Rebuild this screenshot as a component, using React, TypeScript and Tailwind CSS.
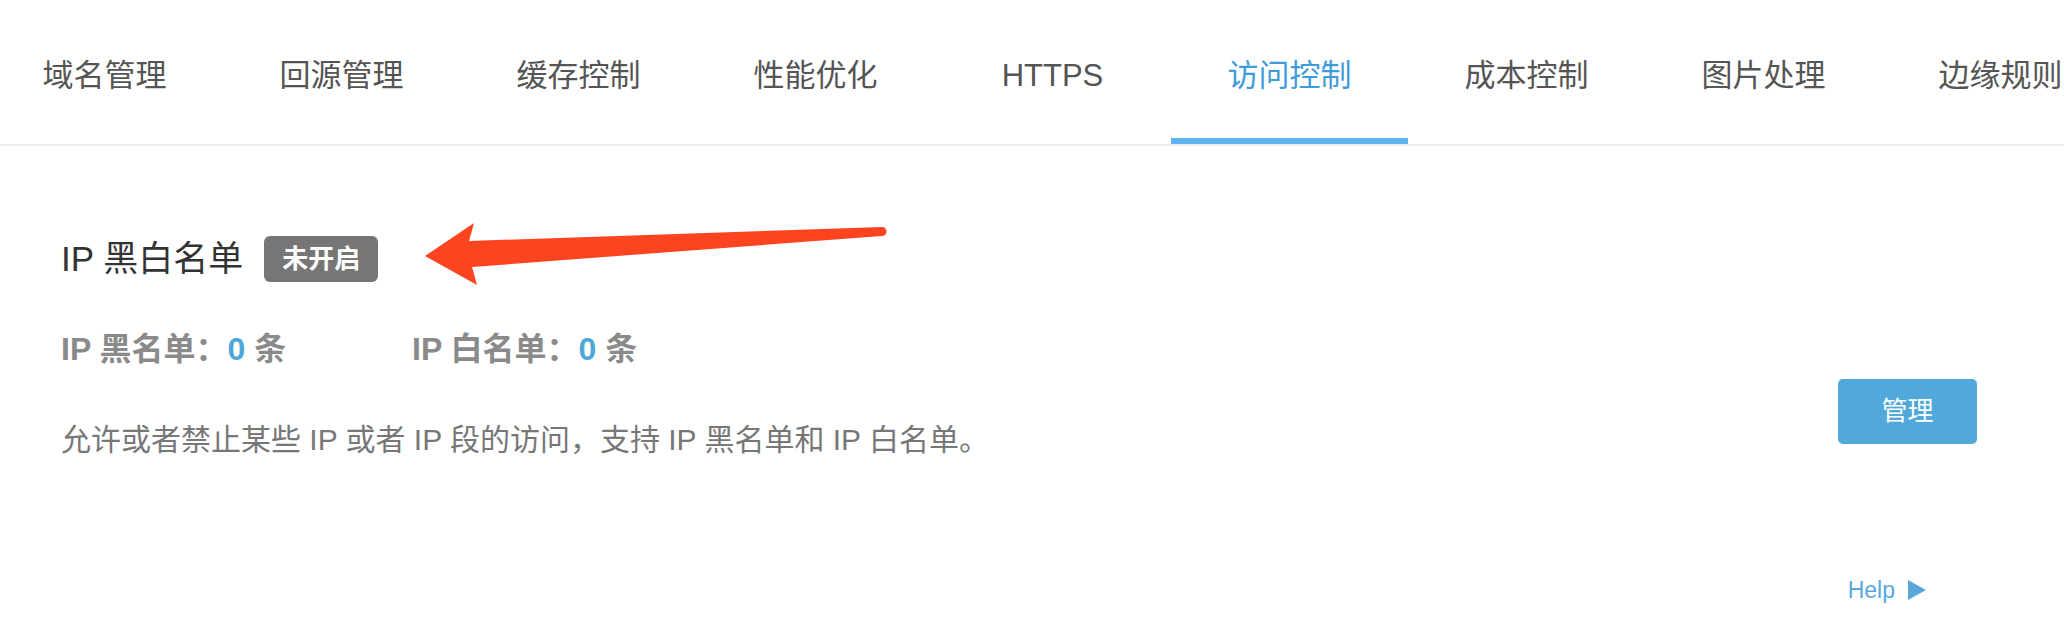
import React from "react";

const tabs = ["域名管理", "回源管理", "缓存控制", "性能优化", "HTTPS", "访问控制", "成本控制", "图片处理", "边缘规则"];

export default function App() {
  return (
    <div
      className="relative w-[2064px] h-[620px] overflow-hidden bg-white"
      style={{ fontFamily: '"Liberation Sans", "Noto Sans CJK SC", sans-serif' }}
    >
      <nav className="flex h-[146px] border-b-[2px] border-[#ececec] ml-[-14px]">
        {tabs.map((t, i) => (
          <div
            key={t}
            className={
              i === 5
                ? "flex w-[237px] shrink-0 items-center justify-center pt-[14px] border-b-[6px] border-[#5eb2ee] text-[31px] text-[#3f9cdb]"
                : "flex w-[237px] shrink-0 items-center justify-center pt-[14px] border-b-[6px] border-transparent text-[31px] text-[#555555]"
            }
          >
            {t}
          </div>
        ))}
      </nav>

      <div className="flex pl-[61px] pr-[87px] mt-[90px]">
        <div className="flex flex-col">
          <div className="flex h-[46px] items-center">
            <span className="text-[35px] leading-[46px] text-[#333333]">IP 黑白名单</span>
            <span className="ml-[21px] flex h-[46px] items-center rounded-[6px] bg-[#767676] px-[18px] text-[26px] font-bold text-white">
              未开启
            </span>
          </div>
          <div className="mt-[45px] flex h-[44px] items-center text-[32px] font-bold leading-[44px] text-[#8a8a8a]">
            <span className="w-[351px]">
              IP 黑名单：<span className="text-[#4ea7d8]">0</span> 条
            </span>
            <span>
              IP 白名单：<span className="text-[#4ea7d8]">0</span> 条
            </span>
          </div>
          <div className="mt-[47px] h-[44px] text-[30px] leading-[44px] text-[#777777]">
            允许或者禁止某些 IP 或者 IP 段的访问，支持 IP 黑名单和 IP 白名单。
          </div>
        </div>
        <div className="ml-auto pt-[143px]">
          <button className="flex h-[65px] w-[139px] items-center justify-center rounded-[5px] bg-[#51a9db] text-[26px] text-white">
            管理
          </button>
        </div>
      </div>

      <div className="mt-[113px] flex justify-end pr-[138px]">
        <a className="flex items-center gap-[13px] text-[23px] leading-[30px] text-[#5aa7dc]">
          Help
          <svg width="18" height="20" viewBox="0 0 18 20">
            <polygon points="0,0 18,10 0,20" fill="#5aa7dc" />
          </svg>
        </a>
      </div>

      <svg
        className="absolute left-[420px] top-[218px]"
        width="475"
        height="72"
        viewBox="0 0 475 72"
      >
        <path
          d="M5 38 L54 5 L49 23 L462 9 A4.5 4.5 0 0 1 462 18 L52 49 L57 67 Z"
          fill="#fc4520"
        />
      </svg>
    </div>
  );
}
